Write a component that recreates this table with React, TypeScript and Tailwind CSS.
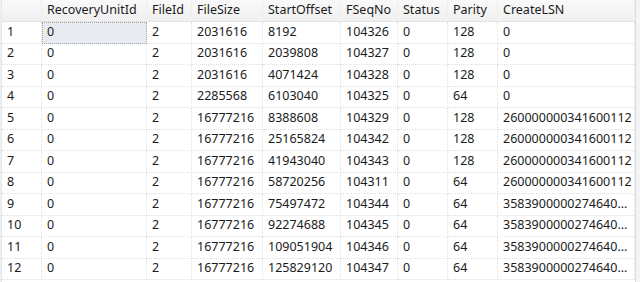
import React from "react";

const cols = [
  { key: "RecoveryUnitId", w: 105 },
  { key: "FileId", w: 45 },
  { key: "FileSize", w: 71 },
  { key: "StartOffset", w: 78 },
  { key: "FSeqNo", w: 57 },
  { key: "Status", w: 50 },
  { key: "Parity", w: 50 },
  { key: "CreateLSN", w: 137 },
];

const rows: string[][] = [
  ["0", "2", "2031616", "8192", "104326", "0", "128", "0"],
  ["0", "2", "2031616", "2039808", "104327", "0", "128", "0"],
  ["0", "2", "2031616", "4071424", "104328", "0", "128", "0"],
  ["0", "2", "2285568", "6103040", "104325", "0", "64", "0"],
  ["0", "2", "16777216", "8388608", "104329", "0", "128", "260000000341600112"],
  ["0", "2", "16777216", "25165824", "104342", "0", "128", "260000000341600112"],
  ["0", "2", "16777216", "41943040", "104343", "0", "128", "260000000341600112"],
  ["0", "2", "16777216", "58720256", "104311", "0", "64", "260000000341600112"],
  ["0", "2", "16777216", "75497472", "104344", "0", "64", "3583900000274640..."],
  ["0", "2", "16777216", "92274688", "104345", "0", "64", "3583900000274640..."],
  ["0", "2", "16777216", "109051904", "104346", "0", "64", "3583900000274640..."],
  ["0", "2", "16777216", "125829120", "104347", "0", "64", "3583900000274640..."],
];

export default function App() {
  return (
    <div
      className="w-[640px] h-[282px] bg-white overflow-hidden flex text-[12.5px] text-[#1b1b1b]"
      style={{ fontFamily: '"Noto Sans", "Open Sans", sans-serif' }}
    >
      <div className="w-[2px] bg-[#eef0f2] border-r border-[#e3e6ea]" />
      <div className="flex flex-col w-[633px]">
        <div className="flex h-[22px] bg-gradient-to-b from-[#f9f9f9] to-[#f0f0f0] border-b border-[#e4e4e4]">
          <div className="w-[40px] border-r border-[#efefef]" />
          {cols.map((c) => (
            <div
              key={c.key}
              className="flex items-center pl-[5px] border-r border-[#efefef] whitespace-nowrap overflow-hidden"
              style={{ width: c.w }}
            >
              {c.key}
            </div>
          ))}
        </div>
        {rows.map((r, i) => (
          <div key={i} className="flex h-[21.5px]">
            <div className="w-[40px] flex items-center pl-[5px] border-r border-b border-dotted border-[#e0e0e0]">
              {i + 1}
            </div>
            {r.map((v, j) => {
              const sel = i === 0 && j === 0;
              return (
                <div
                  key={j}
                  className={
                    sel
                      ? "flex items-center pl-[4px] border border-dotted border-[#a0a6ac] bg-[#e8ebef] whitespace-nowrap overflow-hidden"
                      : "flex items-center pl-[5px] border-r border-b border-dotted border-[#e0e0e0] whitespace-nowrap overflow-hidden"
                  }
                  style={{ width: cols[j].w }}
                >
                  {v}
                </div>
              );
            })}
          </div>
        ))}
      </div>
      <div className="w-[5px] bg-[#f3f4f6] border-l border-[#dadde2]" />
    </div>
  );
}
